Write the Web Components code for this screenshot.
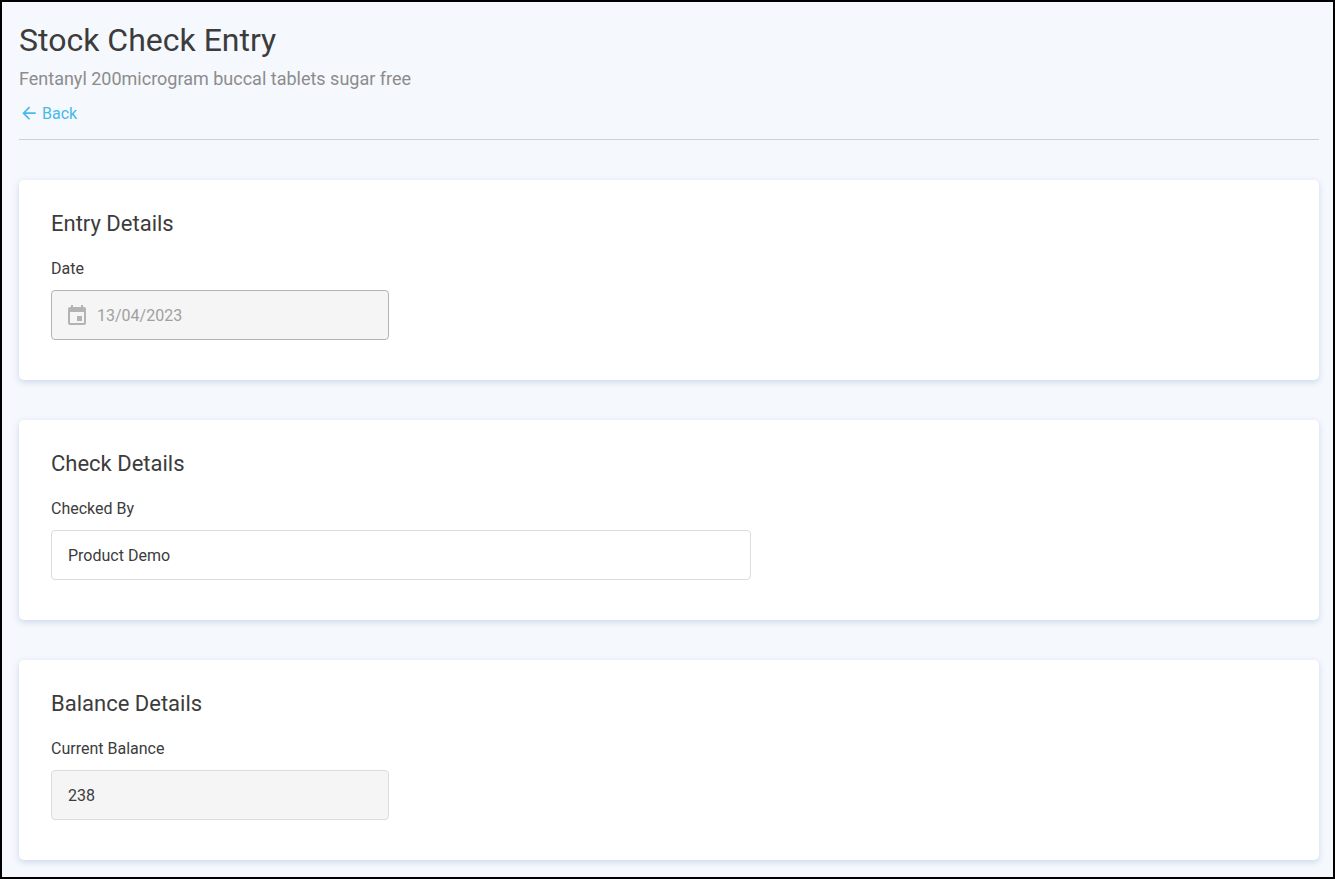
<!DOCTYPE html>
<html lang="en">
<head>
<meta charset="utf-8">
<meta name="viewport" content="width=device-width, initial-scale=1">
<title>Stock Check Entry</title>
<style>
  html { height: 100%; }
  body { margin: 0; min-height: 100%; display: flex; flex-direction: column; font-family: Roboto, sans-serif; font-size: 16px; line-height: 24px; color: #3c3c3c; }
</style>
</head>
<body>
<stock-page>
  <page-header slot="header" heading="Stock Check Entry" subheading="Fentanyl 200microgram buccal tablets sugar free"></page-header>
  <detail-card heading="Entry Details">
    <form-field label="Date" value="13/04/2023" kind="date"></form-field>
  </detail-card>
  <detail-card heading="Check Details">
    <form-field label="Checked By" value="Product Demo" kind="wide"></form-field>
  </detail-card>
  <detail-card heading="Balance Details">
    <form-field label="Current Balance" value="238" kind="readonly"></form-field>
  </detail-card>
</stock-page>
<script>
  class StockPage extends HTMLElement {
    constructor() {
      super();
      this.attachShadow({ mode: 'open' }).innerHTML = `
        <style>
          :host { display: block; flex: 1; box-sizing: border-box; border: 2px solid #000; background: #f5f8fd; padding: 16px 14px 16px 17px; }
          main { display: flex; flex-direction: column; gap: 40px; }
        </style>
        <main><slot name="header"></slot><slot></slot></main>`;
    }
  }

  class PageHeader extends HTMLElement {
    constructor() {
      super();
      this.attachShadow({ mode: 'open' }).innerHTML = `
        <style>
          :host { display: block; border-bottom: 1px solid #cdd1d3; padding-bottom: 13px; }
          h1 { margin: 0; font-size: 32px; line-height: 44px; font-weight: 400; }
          p { margin: 5px 0 11px; font-size: 18px; line-height: 24px; color: #8c8c8c; }
          a { display: inline-flex; align-items: center; gap: 3px; color: #47b9e9; text-decoration: none; vertical-align: top; }
          svg { width: 20px; height: 20px; }
        </style>
        <h1></h1>
        <p></p>
        <a href="#"><svg viewBox="0 0 24 24" fill="currentColor" aria-hidden="true"><path d="M20 10H7.83l5.59-5.59L12 3l-8 8 8 8 1.41-1.41L7.83 12H20v-2z"/></svg>Back</a>`;
    }
    connectedCallback() {
      this.shadowRoot.querySelector('h1').textContent = this.getAttribute('heading');
      this.shadowRoot.querySelector('p').textContent = this.getAttribute('subheading');
    }
  }

  class DetailCard extends HTMLElement {
    constructor() {
      super();
      this.attachShadow({ mode: 'open' }).innerHTML = `
        <style>
          :host { display: block; background: #fff; border-radius: 5px; padding: 29px 32px 40px; box-shadow: 0 2px 6px rgba(60, 100, 170, .22); }
          h2 { margin: 0 0 18px; font-size: 22px; line-height: 30px; font-weight: 400; }
        </style>
        <section><h2></h2><slot></slot></section>`;
    }
    connectedCallback() {
      this.shadowRoot.querySelector('h2').textContent = this.getAttribute('heading');
    }
  }

  class FormField extends HTMLElement {
    constructor() {
      super();
      this.attachShadow({ mode: 'open' }).innerHTML = `
        <style>
          :host { display: flex; flex-direction: column; gap: 9px; max-width: 338px; }
          :host([kind="wide"]) { max-width: 700px; }
          .box { display: flex; align-items: center; gap: 11px; box-sizing: border-box; height: 50px; padding: 0 16px; border: 1px solid #dcdcdc; border-radius: 4px; background: #fff; }
          input { flex: 1; min-width: 0; border: 0; padding: 2px 0 0; outline: 0; background: none; font: inherit; color: inherit; }
          svg { display: none; width: 18px; height: 20px; fill: #b3b3b3; }
          :host([kind="readonly"]) .box { background: #f5f5f5; }
          :host([kind="date"]) .box { background: #f5f5f5; border-color: #b3b3b3; }
          :host([kind="date"]) input { color: #a0a0a0; }
          :host([kind="date"]) svg { display: block; }
        </style>
        <label for="field"></label>
        <div class="box">
          <svg viewBox="0 0 18 20" aria-hidden="true"><path fill-rule="evenodd" d="M3 0h2v2h8V0h2v2h1a2 2 0 0 1 2 2v14a2 2 0 0 1-2 2H2a2 2 0 0 1-2-2V4a2 2 0 0 1 2-2h1zM2 7v11h14V7zM9 11h5v5H9z"/></svg>
          <input id="field" type="text">
        </div>`;
    }
    connectedCallback() {
      const input = this.shadowRoot.querySelector('input');
      this.shadowRoot.querySelector('label').textContent = this.getAttribute('label');
      input.value = this.getAttribute('value');
      input.disabled = this.getAttribute('kind') === 'date';
      input.readOnly = this.getAttribute('kind') === 'readonly';
    }
  }

  customElements.define('stock-page', StockPage);
  customElements.define('page-header', PageHeader);
  customElements.define('detail-card', DetailCard);
  customElements.define('form-field', FormField);
</script>
</body>
</html>
